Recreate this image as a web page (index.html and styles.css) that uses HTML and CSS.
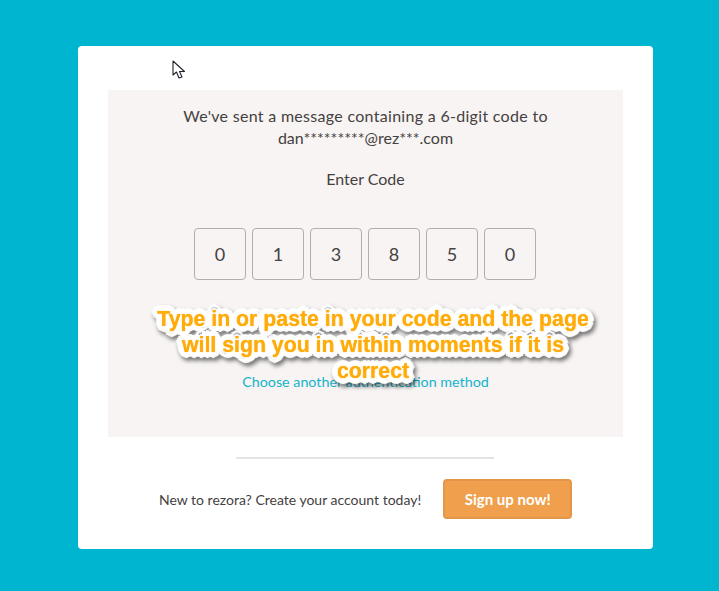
FILE: index.html
```html
<!DOCTYPE html>
<html lang="en">
<head>
  <meta charset="UTF-8" />
  <title>Enter Code</title>
  <link rel="stylesheet" href="styles.css">
</head>
<body>
  <div class="card">
    <div class="panel">
      <p class="message"><span class="message-line">We've sent a message containing a 6-digit code to</span><br>dan*********@rez***.com</p>
      <p class="enter-label">Enter Code</p>
      <div class="code-row">
        <div class="code-box">0</div>
        <div class="code-box">1</div>
        <div class="code-box">3</div>
        <div class="code-box">8</div>
        <div class="code-box">5</div>
        <div class="code-box">0</div>
      </div>
      <a class="other-method" href="#">Choose another authentication method</a>
    </div>
    <div class="divider"></div>
    <div class="signup">
      <span class="signup-text">New to rezora? Create your account today!</span>
      <button class="signup-btn">Sign up now!</button>
    </div>
  </div>

  <!-- annotation laid over the form -->
  <div class="callout">
    <span class="callout-line first">Type in or paste in your code and the page</span>
    <span class="callout-line second">will sign you in within moments if it is</span>
    <span class="callout-line">correct</span>
  </div>

  <!-- mouse pointer captured in the screenshot -->
  <svg class="pointer" width="14" height="20" viewBox="0 0 14 20">
    <path d="M1 1 L1 15 L4.5 12 L7 18 L10 17 L7.5 11.5 L12.5 11.5 Z" fill="#fff" stroke="#20242c" stroke-width="1.1" stroke-linejoin="round"/>
  </svg>
</body>
</html>
```

FILE: styles.css
```css
html, body {
  margin: 0;
  height: 100%;
}
body {
  position: relative;
  height: 591px;
  overflow: hidden;
  background-color: #00b5cf;
  font-family: Lato, "Open Sans", sans-serif;
  color: #45413f;
}
.card {
  box-sizing: border-box;
  width: 575px;
  height: 503px;
  margin: 46px 0 0 78px;
  padding: 44px 30px 0;
  background-color: #fff;
  border-radius: 4px;
  float: left;
}
.panel {
  box-sizing: border-box;
  height: 347px;
  padding-top: 15px;
  background-color: #f7f4f3;
  text-align: center;
}
.message {
  margin: 0;
  font-size: 16px;
  line-height: 22px;
}
.message-line {
  letter-spacing: 0.3px;
}
.enter-label {
  margin: 19px 0 0;
  font-size: 16px;
  line-height: 22px;
}
.code-row {
  display: flex;
  gap: 6px;
  margin: 38px 0 0 86px;
}
.code-box {
  box-sizing: border-box;
  width: 52px;
  height: 52px;
  border: 1px solid #b0aeae;
  border-radius: 4px;
  font-size: 18px;
  line-height: 50px;
}
.other-method {
  display: block;
  margin-top: 92px;
  font-size: 14.3px;
  line-height: 20px;
  color: #14b3cb;
  text-decoration: none;
}
.divider {
  width: 258px;
  height: 2px;
  margin: 20px 0 0 128px;
  background-color: #e6e3e4;
}
.signup {
  display: flex;
  align-items: center;
  gap: 22px;
  margin: 20px 0 0 51px;
}
.signup-text {
  font-size: 14px;
}
.signup-btn {
  box-sizing: border-box;
  width: 129px;
  height: 40px;
  border: 2px solid #e3954a;
  border-radius: 4px;
  background-color: #f09f4d;
  color: #fff;
  font-family: Lato, sans-serif;
  font-size: 15px;
  font-weight: 700;
}
.callout {
  position: absolute;
  left: 148px;
  top: 306px;
  width: 450px;
  display: flex;
  flex-direction: column;
  align-items: center;
  font-family: "Liberation Sans", Arial, sans-serif;
  font-size: 21.3px;
  font-weight: 700;
  line-height: 26px;
  color: #ffab0a;
  filter: drop-shadow(2px 3px 2px rgba(0, 0, 0, 0.55));
}
.callout-line {
  white-space: nowrap;
  text-shadow:
    0 0 1px #ffab0a,
    6px 0 1px #fff, -6px 0 1px #fff, 0 6px 1px #fff, 0 -6px 1px #fff,
    4px 4px 1px #fff, -4px 4px 1px #fff, 4px -4px 1px #fff, -4px -4px 1px #fff,
    5px 2px 1px #fff, -5px 2px 1px #fff, 5px -2px 1px #fff, -5px -2px 1px #fff,
    2px 5px 1px #fff, -2px 5px 1px #fff, 2px -5px 1px #fff, -2px -5px 1px #fff;
}
.callout-line.first {
  z-index: 2;
}
.callout-line.second {
  z-index: 1;
}
.pointer {
  position: absolute;
  left: 172px;
  top: 60px;
}
```
